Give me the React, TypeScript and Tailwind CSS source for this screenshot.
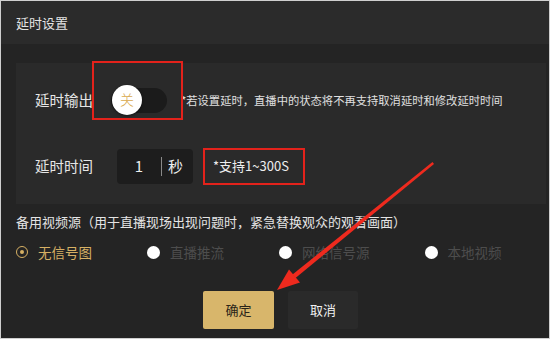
import { Fragment } from 'react';

const font = { fontFamily: '"Noto Sans CJK SC", "Noto Sans", sans-serif' };

const sources = [
  { label: '无信号图', active: true },
  { label: '直播推流', active: false },
  { label: '网络信号源', active: false },
  { label: '本地视频', active: false },
];

function Toggle() {
  return (
    <div className="relative w-[56px] h-[25px] rounded-full bg-[#1b1b1b]">
      <div className="absolute left-[1px] top-[-3px] w-[30px] h-[30px] rounded-full bg-white shadow-[0_1px_3px_rgba(0,0,0,0.5)] flex items-center justify-center text-[14px] font-light text-[#d9a94e]">
        关
      </div>
    </div>
  );
}

function Radio({ label, active }: { label: string; active: boolean }) {
  return (
    <div className="flex items-center gap-[10px]">
      {active ? (
        <span className="w-[12px] h-[12px] rounded-full border-[1.5px] border-[#d6b064] flex items-center justify-center">
          <span className="w-[4px] h-[4px] rounded-full bg-[#d6b064]" />
        </span>
      ) : (
        <span className="w-[13px] h-[13px] rounded-full bg-white" />
      )}
      <span className={`text-[13.5px] leading-[18px] ${active ? 'text-[#d6b064]' : 'text-[#4d4d4d]'}`}>{label}</span>
    </div>
  );
}

export default function App() {
  return (
    <div className="relative w-[550px] h-[339px] border border-[#cfcfcf] bg-[#242424] overflow-hidden" style={font}>
      <div className="h-[43px] bg-[#2b2b2b] flex items-center px-[15px] text-[13px] text-[#e4e4e4]">延时设置</div>

      <div className="flex flex-col">
        <div className="mt-[19px] ml-[15px] mr-[3px] h-[141px] bg-[#2a2a2a] pl-[19px] pt-[12px] flex flex-col">
          <div className="h-[50px] flex items-center">
            <span className="w-[76px] text-[14.5px] text-[#e6e6e6]">延时输出</span>
            <Toggle />
            <span className="ml-[14px] text-[11.3px] text-[#e0e0e0]">*若设置延时，直播中的状态将不再支持取消延时和修改延时时间</span>
          </div>
          <div className="mt-[23px] h-[36px] flex items-center">
            <span className="w-[82px] text-[14.5px] text-[#e6e6e6]">延时时间</span>
            <div className="w-[76px] h-[35px] rounded-[4px] bg-[#1d1d1d] flex items-center text-[15px] text-[#eeeeee]">
              <span className="w-[44px] text-center">1</span>
              <span className="w-[1px] h-[19px] bg-[#8a8a8a]" />
              <span className="ml-[6px]">秒</span>
            </div>
            <div className="ml-[10px] w-[102px] h-[37px] border-2 border-[#e3221b] flex items-center pl-[8px] text-[13px] text-[#eeeeee]">
              *支持1~300S
            </div>
          </div>
        </div>

        <div className="mt-[9px] px-[15px] text-[13px] leading-[18px] text-[#e4e4e4]">
          备用视频源（用于直播现场出现问题时，紧急替换观众的观看画面）
        </div>

        <div className="mt-[12px] px-[15px] flex items-center gap-[55px]">
          {sources.map((s) => (
            <Fragment key={s.label}>
              <Radio label={s.label} active={s.active} />
            </Fragment>
          ))}
        </div>

        <div className="mt-[30px] pl-[202px] flex gap-[14px]">
          <button className="w-[71px] h-[38px] rounded-[2px] bg-[#d8b66b] text-[13px] text-[#2a2418]">确定</button>
          <button className="w-[70px] h-[38px] rounded-[2px] bg-[#2a2a2a] text-[13px] text-[#f0f0f0]">取消</button>
        </div>
      </div>

      {/* annotation box around toggle */}
      <div className="absolute left-[91px] top-[60px] w-[91px] h-[59px] border-2 border-[#e3221b] pointer-events-none" />

      {/* annotation arrow */}
      <svg className="absolute left-0 top-0 pointer-events-none" width="550" height="339" viewBox="0 0 550 339">
        <polygon points="431.5,161 433,163 294.5,277 291.5,273.5" fill="#ee2a1e" />
        <polygon points="276,289 288,268.5 299,281.5" fill="#ee2a1e" />
      </svg>
    </div>
  );
}
